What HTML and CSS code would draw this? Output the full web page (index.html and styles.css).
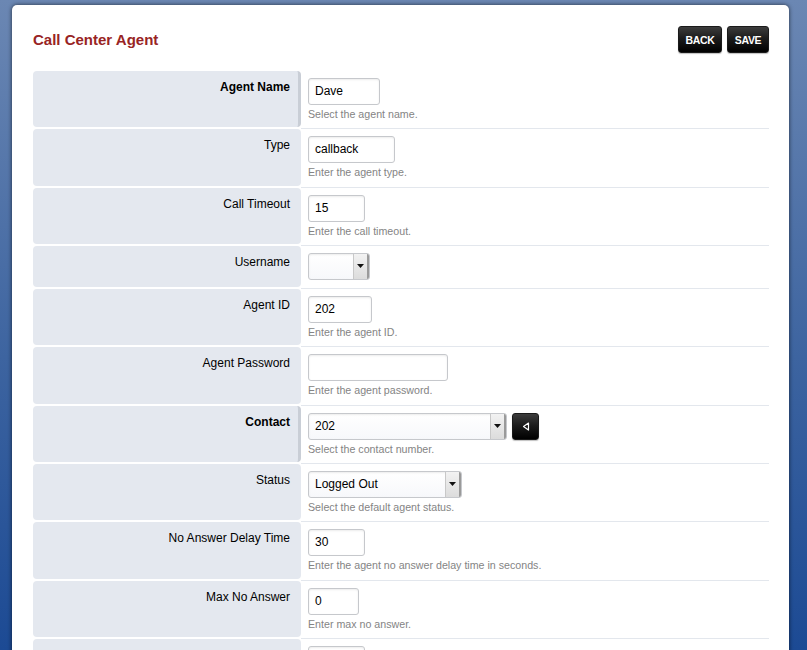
FILE: index.html
```html
<!DOCTYPE html>
<html>
<head>
<meta charset="utf-8">
<title>Call Center Agent</title>
<link rel="stylesheet" href="styles.css">
</head>
<body>
<div class="card">
  <div class="header">
    <h1 class="title">Call Center Agent</h1>
    <div class="actions">
      <button class="btn btn-back">BACK</button>
      <button class="btn btn-save">SAVE</button>
    </div>
  </div>

  <div class="form">
    <div class="row">
      <div class="label req">Agent Name</div>
      <div class="value">
        <div class="input w-name">Dave</div>
        <div class="desc">Select the agent name.</div>
      </div>
    </div>
    <div class="row">
      <div class="label">Type</div>
      <div class="value">
        <div class="input w-type">callback</div>
        <div class="desc">Enter the agent type.</div>
      </div>
    </div>
    <div class="row">
      <div class="label">Call Timeout</div>
      <div class="value">
        <div class="input w-short">15</div>
        <div class="desc">Enter the call timeout.</div>
      </div>
    </div>
    <div class="row">
      <div class="label">Username</div>
      <div class="value nodesc">
        <div class="select w-user"><span class="sel-text"></span><span class="sel-arrow"><svg width="7" height="4" viewBox="0 0 7 4"><path d="M0 0H7L3.5 4Z" fill="#111"/></svg></span></div>
      </div>
    </div>
    <div class="row">
      <div class="label">Agent ID</div>
      <div class="value">
        <div class="input w-id">202</div>
        <div class="desc">Enter the agent ID.</div>
      </div>
    </div>
    <div class="row">
      <div class="label">Agent Password</div>
      <div class="value">
        <div class="input w-pass"></div>
        <div class="desc">Enter the agent password.</div>
      </div>
    </div>
    <div class="row">
      <div class="label req">Contact</div>
      <div class="value">
        <div class="inline">
          <div class="select w-contact"><span class="sel-text">202</span><span class="sel-arrow"><svg width="7" height="4" viewBox="0 0 7 4"><path d="M0 0H7L3.5 4Z" fill="#111"/></svg></span></div>
          <button class="btn btn-icon"><svg width="8" height="9" viewBox="0 0 8 9"><path d="M6.5 1L1.5 4.5L6.5 8Z" fill="none" stroke="#fff" stroke-width="1.2" stroke-linejoin="round"/></svg></button>
        </div>
        <div class="desc">Select the contact number.</div>
      </div>
    </div>
    <div class="row">
      <div class="label">Status</div>
      <div class="value">
        <div class="select w-status"><span class="sel-text">Logged Out</span><span class="sel-arrow"><svg width="7" height="4" viewBox="0 0 7 4"><path d="M0 0H7L3.5 4Z" fill="#111"/></svg></span></div>
        <div class="desc">Select the default agent status.</div>
      </div>
    </div>
    <div class="row">
      <div class="label">No Answer Delay Time</div>
      <div class="value">
        <div class="input w-short">30</div>
        <div class="desc">Enter the agent no answer delay time in seconds.</div>
      </div>
    </div>
    <div class="row">
      <div class="label">Max No Answer</div>
      <div class="value">
        <div class="input w-max">0</div>
        <div class="desc">Enter max no answer.</div>
      </div>
    </div>
    <div class="row">
      <div class="label">Wrap Up Time</div>
      <div class="value">
        <div class="input w-short">10</div>
        <div class="desc">Enter the wrap up time.</div>
      </div>
    </div>
    <div class="row">
      <div class="label">Reject Delay Time</div>
      <div class="value">
        <div class="input w-short">10</div>
        <div class="desc">Enter the reject delay time.</div>
      </div>
    </div>
  </div>
</div>
</body>
</html>
```

FILE: styles.css
```css
html {
  background: linear-gradient(to bottom, #6b87b3 0%, #3d64a0 55%, #1c4a94 100%) fixed;
  min-height: 100%;
}
body {
  margin: 0;
  padding: 5px 18px 0 12px;
  font-family: "Liberation Sans", Arial, sans-serif;
  font-size: 12px;
  color: #000;
}
.card {
  width: 777px;
  background: #fff;
  border-radius: 5px 5px 0 0;
  box-shadow: 0 0 4px rgba(0, 0, 0, 0.65);
  padding: 20px 20px 20px 21px;
  box-sizing: border-box;
}
.header {
  display: flex;
  justify-content: space-between;
  align-items: flex-start;
  height: 46px;
}
.title {
  margin: 7px 0 0 0;
  font-size: 15px;
  font-weight: bold;
  color: #982424;
  line-height: 16px;
}
.actions {
  display: flex;
  gap: 5px;
  margin-top: 1px;
}
.btn {
  height: 27px;
  border: 1px solid #1a1a1a;
  border-radius: 3px;
  background: linear-gradient(to bottom, #3c3c3c 0%, #1c1c1c 45%, #000 100%);
  color: #fff;
  font-family: "Liberation Sans", Arial, sans-serif;
  font-weight: bold;
  font-size: 10.5px;
  letter-spacing: -0.3px;
  padding: 0;
  box-shadow: 0 1px 1px rgba(0,0,0,0.25);
  display: flex;
  align-items: center;
  justify-content: center;
}
.btn-back { width: 44px; margin-left: -1px; }
.btn-save { width: 42px; }
.btn-icon { width: 27px; height: 27px; margin-left: 5px; }

.form {
  display: flex;
  flex-direction: column;
}
.row {
  display: grid;
  grid-template-columns: 268px 1fr;
}
.label {
  background: #e4e8ef;
  border-radius: 4px;
  margin-bottom: 2px;
  padding: 9px 11px 0 0;
  text-align: right;
  line-height: 14px;
}
.label.req {
  font-weight: bold;
  border-right: 3px solid #c9ced6;
  padding-right: 8px;
}
.value {
  padding: 7px 0 7px 7px;
  border-bottom: 1px solid #e3e7ed;
}
.value.nodesc {
  padding-bottom: 8px;
}
.input, .select {
  height: 27px;
  box-sizing: border-box;
  border: 1px solid #c6c8cc;
  border-radius: 3px;
  background: #fff;
  box-shadow: inset 0 1px 2px rgba(0,0,0,0.08);
  font-size: 12px;
  line-height: 25px;
  padding-left: 6px;
}
.w-name { width: 72px; }
.w-type { width: 87px; }
.w-short { width: 57px; }
.w-id { width: 64px; }
.w-pass { width: 140px; }
.w-max { width: 51px; }
.select {
  display: flex;
  padding-left: 0;
  overflow: hidden;
  background: linear-gradient(to bottom, #fff, #f7f8fb);
}
.w-user { width: 62px; }
.w-contact { width: 199px; }
.w-status { width: 154px; }
.sel-text {
  flex: 1;
  padding-left: 6px;
}
.sel-arrow {
  width: 13px;
  border-left: 1px solid #c8c8c8;
  border-right: 2px solid #9a9a9a;
  background: linear-gradient(to bottom, #f2f2f2, #dcdcdc);
  display: flex;
  align-items: center;
  justify-content: center;
}
.inline {
  display: flex;
  align-items: center;
}
.desc {
  margin-top: 2px;
  font-size: 8pt;
  line-height: 14.33px;
  color: #848484;
}
```
